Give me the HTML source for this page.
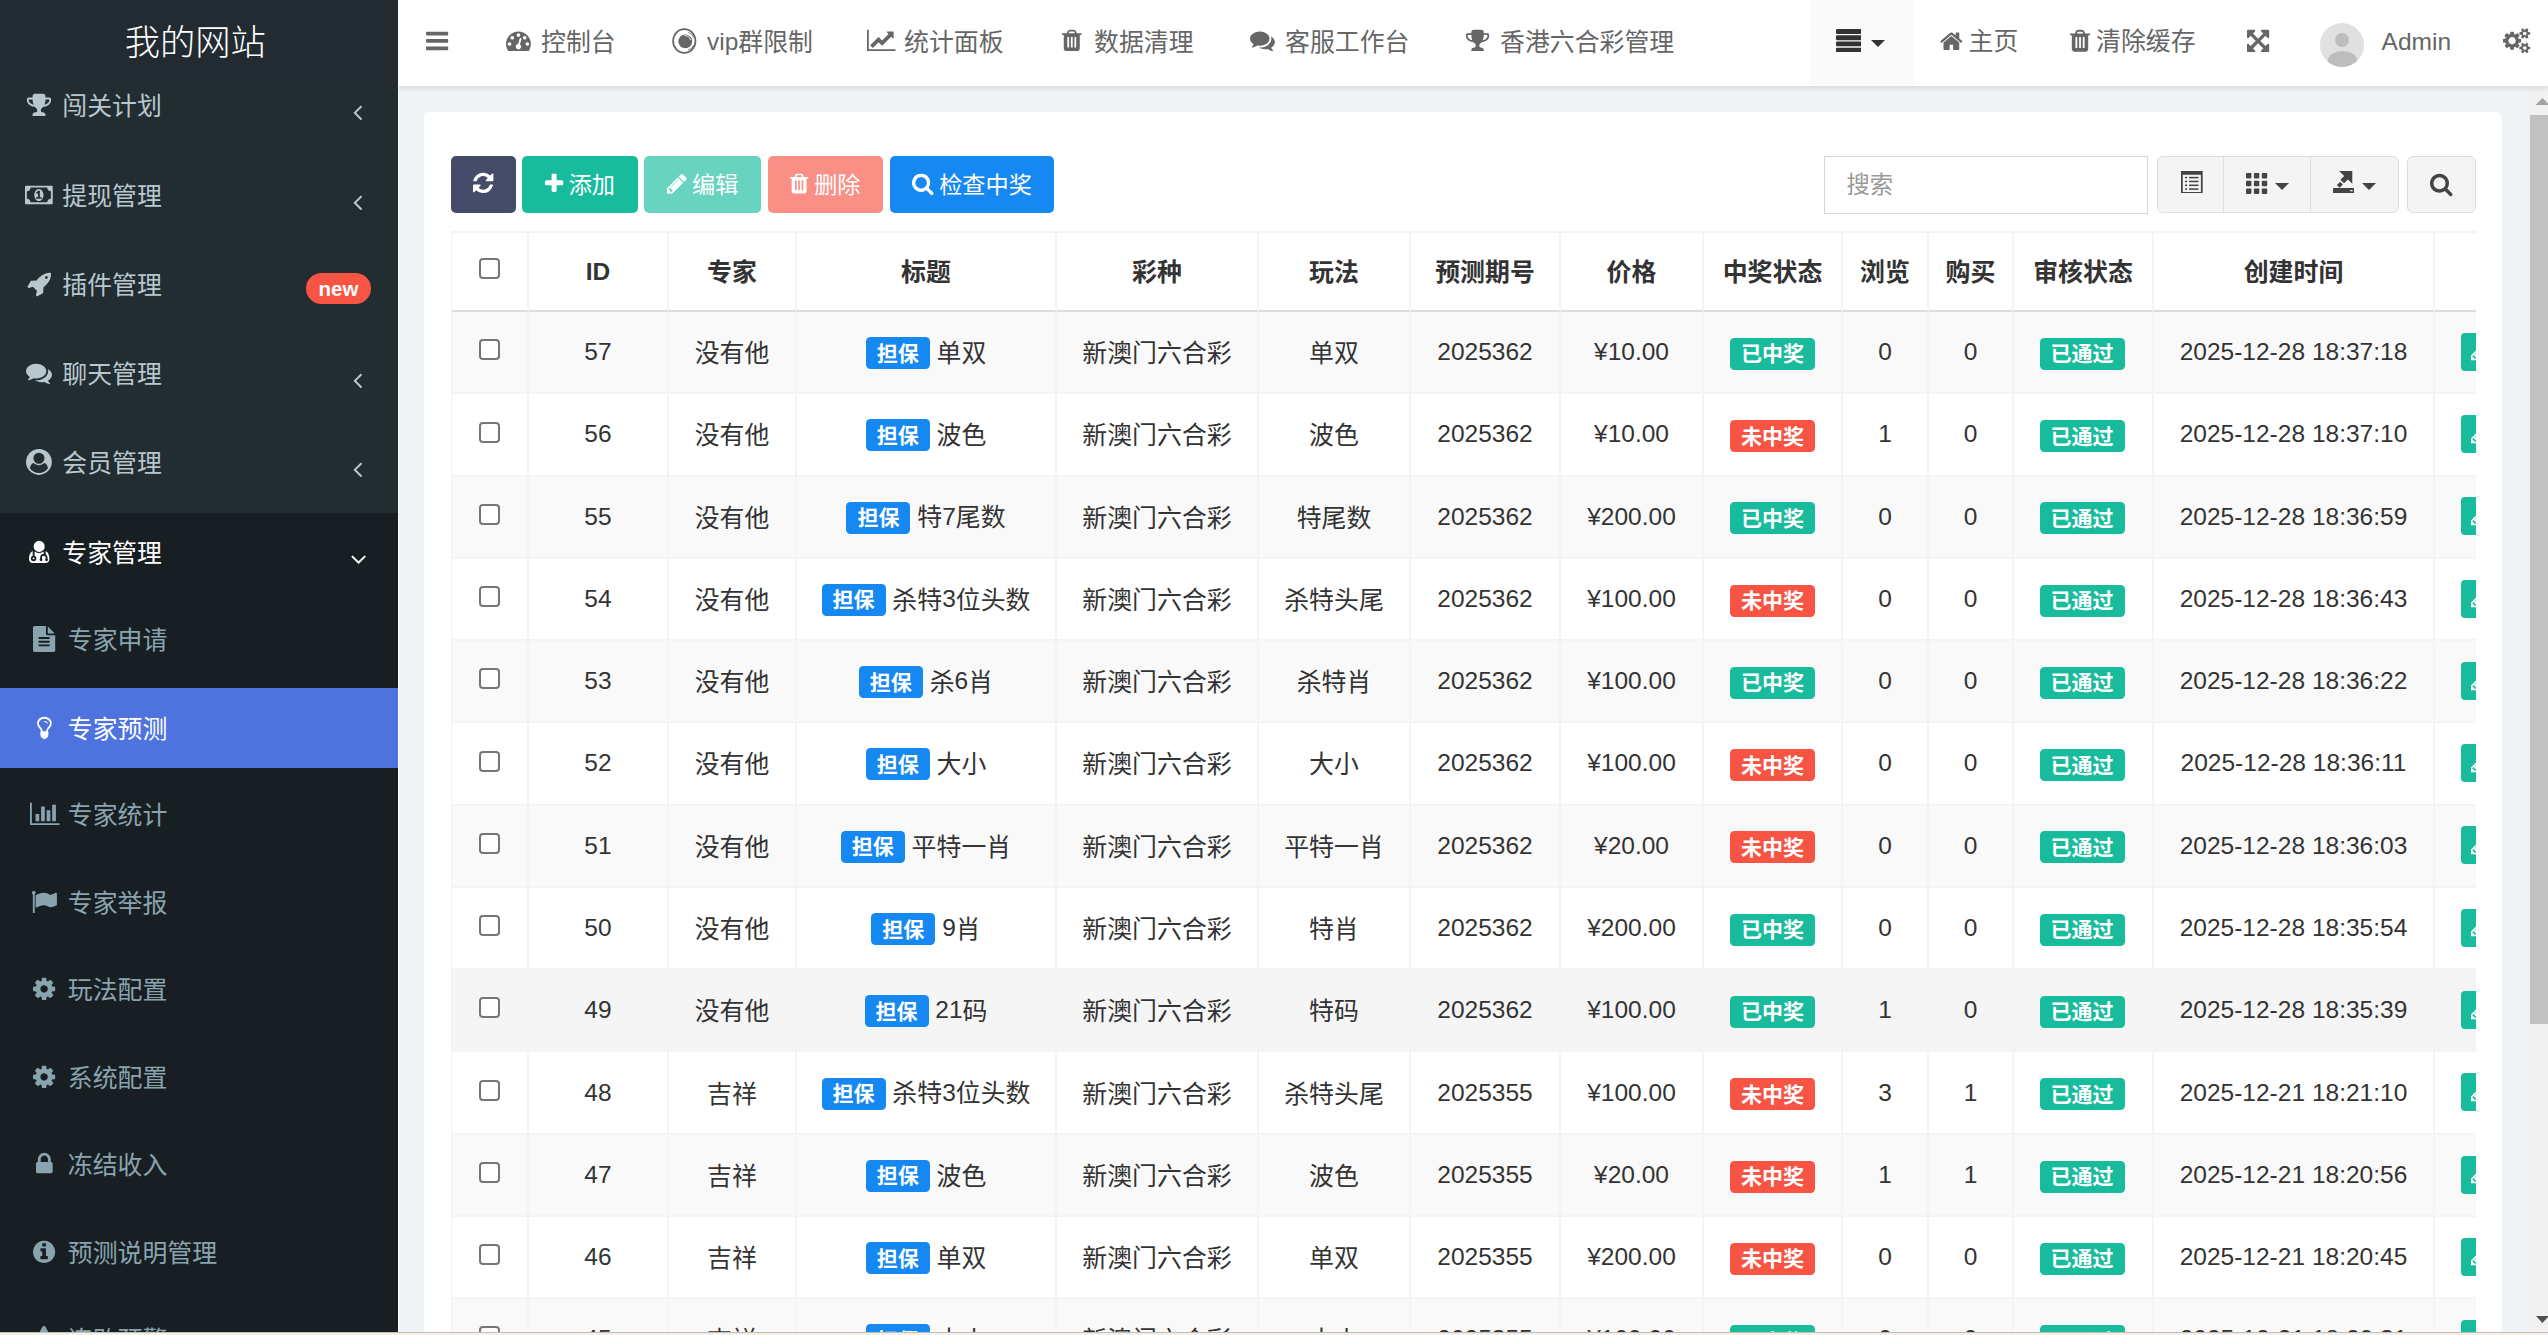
<!DOCTYPE html><html lang="zh-CN"><head><meta charset="utf-8"><title>我的网站</title><style>
*{box-sizing:border-box}
html,body{margin:0;padding:0}
body{width:2548px;height:1335px;overflow:hidden;position:relative;background:#f0f3f6;
 font-family:"Liberation Sans","Noto Sans CJK SC",sans-serif;font-size:24.9px;color:#333;line-height:1.428}
.l{font-size:24.5px}
td .c{position:relative;top:1.8px}
th .c{position:relative;top:1.3px}
th .cb{top:-5px}
svg.fa{display:inline-block;vertical-align:-0.143em;overflow:visible}
.abs{position:absolute}
#side{position:absolute;left:0;top:0;width:398px;height:1332px;background:#222d32;overflow:hidden;z-index:5}
#logo{display:block;text-decoration:none;position:absolute;left:0;top:0;width:398px;height:86px;background:#222b31;color:#fff;font-size:35.3px;font-weight:300;
 text-align:center;line-height:85.5px;z-index:3;padding-right:7.5px}
.mi{display:block;text-decoration:none;position:absolute;left:0;width:398px;color:#b8c7ce;white-space:nowrap}
.mi .ic{position:absolute;top:0;height:100%;display:flex;align-items:center;justify-content:center;width:60px}
.mi .tx{position:absolute;top:1.8px;height:100%;display:flex;align-items:center;font-size:24.9px}
.mi .ar{position:absolute;top:0;height:100%;display:flex;align-items:center;justify-content:center;width:30px}
.mi.top{height:79px}
.mi.top .ic{left:9px}
.mi.top .tx{left:62.3px}
.mi.sub{height:80px;color:#8aa4af}
.mi.sub .ic{left:14.3px}
.mi.sub .tx{left:67.8px}
.mi.act{color:#fff}
.mi.sub.act{background:#4e73df}
#subbg{position:absolute;left:0;top:512.6px;width:398px;height:830px;background:#181f23}
#head{position:absolute;left:398px;top:0;width:2150px;height:86px;background:#fff;box-shadow:0 2px 5px rgba(20,35,50,.13);z-index:2;color:#666}
.hi{position:absolute;top:0;height:84px;display:flex;align-items:center;white-space:nowrap;font-size:24.9px}
#main{position:absolute;left:398px;top:86px;width:2150px;height:1246px;background:#f0f3f6;overflow:hidden}
#panel{position:absolute;left:26px;top:26px;width:2078px;height:1300px;background:#fff;border-radius:6px 6px 0 0}
.btn{border:0;margin:0;padding:0;font-family:inherit;line-height:1.428;cursor:pointer;position:absolute;top:44px;height:57px;border-radius:5px;color:#fff;font-size:23.2px;padding-top:1.5px;display:flex;align-items:center;justify-content:center;white-space:nowrap}
.tb{position:absolute;top:44px;height:56.5px;background:#f4f4f4;border:1.5px solid #ddd;display:flex;align-items:center;justify-content:center;color:#444}
.btn svg{position:relative;top:-1.3px}
.srch{left:1400px;top:44px;width:324px;height:58px;border:1.5px solid #d2d6de;border-radius:0;background:#fff;color:#555;font-family:inherit;font-size:23.3px;padding:1px 0 0 21.5px;margin:0;outline:0}
.srch::placeholder{color:#999;opacity:1}
.caret{display:inline-block;width:0;height:0;border-top:7.5px solid currentColor;border-left:7px solid transparent;border-right:7px solid transparent}
#tw{position:absolute;left:27px;top:119px;width:2025px;height:1126px;overflow:hidden}
table{border-collapse:separate;border-spacing:0;table-layout:fixed;border-top:2px solid #f4f4f4;border-left:1px solid #f4f4f4}
th,td{text-align:center;vertical-align:middle;border-right:2px solid #f4f4f4;border-bottom:2px solid #f4f4f4;padding:0;white-space:nowrap;overflow:hidden}
th{height:79px;font-weight:bold;border-bottom:2px solid #ddd}
td{height:82.28px}
tr.odd td{background:#f9f9f9}
.cb{display:inline-block;width:21px;height:21px;border:2px solid #767676;border-radius:4px;background:#fff;vertical-align:middle;position:relative;top:-4px}
.lb{display:inline-block;font-size:21px;font-weight:bold;color:#fff;line-height:21px;padding:5.5px 11px 5.5px;border-radius:4.5px;vertical-align:baseline;position:relative;top:0.5px}
.lb.s{top:1px}
.lb.b{background:#1688f1}.lb.g{background:#18bc9c}.lb.r{background:#f75444}
.eb{display:inline-block;width:40px;height:38px;background:#18bc9c;border-radius:4px;vertical-align:middle;margin-left:26px;position:relative;top:-0.5px;color:#fff}
.eb svg{position:absolute;left:10.4px;top:8.6px}
tr.hov td{background:#f5f5f5 !important}
</style></head><body>
<aside id="side">
<div id="subbg"></div>
<a href="#" class="mi top" style="top:65.5px"><span class="ic"><svg class="fa" width="24.05" height="25.90" viewBox="0 0 1664 1792" style=""><path fill="currentColor" transform="translate(0,1536) scale(1,-1)" d="M458 653q-74 162 -74 371h-256v-96q0 -78 94.5 -162t235.5 -113zM1536 928v96h-256q0 -209 -74 -371q141 29 235.5 113t94.5 162zM1664 1056v-128q0 -71 -41.5 -143t-112 -130t-173 -97.5t-215.5 -44.5q-42 -54 -95 -95q-38 -34 -52.5 -72.5t-14.5 -89.5q0 -54 30.5 -91 t97.5 -37q75 0 133.5 -45.5t58.5 -114.5v-64q0 -14 -9 -23t-23 -9h-832q-14 0 -23 9t-9 23v64q0 69 58.5 114.5t133.5 45.5q67 0 97.5 37t30.5 91q0 51 -14.5 89.5t-52.5 72.5q-53 41 -95 95q-113 5 -215.5 44.5t-173 97.5t-112 130t-41.5 143v128q0 40 28 68t68 28h288v96 q0 66 47 113t113 47h576q66 0 113 -47t47 -113v-96h288q40 0 68 -28t28 -68z"/></svg></span><span class="tx">闯关计划</span>
<span class="ar" style="left:343px;top:6.5px"><svg class="fa" width="9.25" height="25.90" viewBox="0 0 640 1792" style=""><path fill="currentColor" transform="translate(0,1536) scale(1,-1)" d="M627 992q0 -13 -10 -23l-393 -393l393 -393q10 -10 10 -23t-10 -23l-50 -50q-10 -10 -23 -10t-23 10l-466 466q-10 10 -10 23t10 23l466 466q10 10 23 10t23 -10l50 -50q10 -10 10 -23z"/></svg></span>
</a>
<a href="#" class="mi top" style="top:155.5px"><span class="ic"><svg class="fa" width="27.75" height="25.90" viewBox="0 0 1920 1792" style=""><path fill="currentColor" transform="translate(0,1536) scale(1,-1)" d="M768 384h384v96h-128v448h-114l-148 -137l77 -80q42 37 55 57h2v-288h-128v-96zM1280 640q0 -70 -21 -142t-59.5 -134t-101.5 -101t-138 -39t-138 39t-101.5 101t-59.5 134t-21 142t21 142t59.5 134t101.5 101t138 39t138 -39t101.5 -101t59.5 -134t21 -142zM1792 384 v512q-106 0 -181 75t-75 181h-1152q0 -106 -75 -181t-181 -75v-512q106 0 181 -75t75 -181h1152q0 106 75 181t181 75zM1920 1216v-1152q0 -26 -19 -45t-45 -19h-1792q-26 0 -45 19t-19 45v1152q0 26 19 45t45 19h1792q26 0 45 -19t19 -45z"/></svg></span><span class="tx">提现管理</span>
<span class="ar" style="left:343px;top:6.5px"><svg class="fa" width="9.25" height="25.90" viewBox="0 0 640 1792" style=""><path fill="currentColor" transform="translate(0,1536) scale(1,-1)" d="M627 992q0 -13 -10 -23l-393 -393l393 -393q10 -10 10 -23t-10 -23l-50 -50q-10 -10 -23 -10t-23 10l-466 466q-10 10 -10 23t10 23l466 466q10 10 23 10t23 -10l50 -50q10 -10 10 -23z"/></svg></span>
</a>
<a href="#" class="mi top" style="top:244.5px"><span class="ic"><svg class="fa" width="24.05" height="25.90" viewBox="0 0 1664 1792" style=""><path fill="currentColor" transform="translate(0,1536) scale(1,-1)" d="M1440 1088q0 40 -28 68t-68 28t-68 -28t-28 -68t28 -68t68 -28t68 28t28 68zM1664 1376q0 -249 -75.5 -430.5t-253.5 -360.5q-81 -80 -195 -176l-20 -379q-2 -16 -16 -26l-384 -224q-7 -4 -16 -4q-12 0 -23 9l-64 64q-13 14 -8 32l85 276l-281 281l-276 -85q-3 -1 -9 -1 q-14 0 -23 9l-64 64q-17 19 -5 39l224 384q10 14 26 16l379 20q96 114 176 195q188 187 358 258t431 71q14 0 24 -9.5t10 -22.5z"/></svg></span><span class="tx">插件管理</span>
<span class="abs" style="left:306px;top:28px;width:65px;height:31px;border-radius:16px;background:#f75444;color:#fff;font-weight:bold;font-size:20.5px;line-height:31px;text-align:center">new</span>
</a>
<a href="#" class="mi top" style="top:333.5px"><span class="ic"><svg class="fa" width="25.90" height="25.90" viewBox="0 0 1792 1792" style=""><path fill="currentColor" transform="translate(0,1536) scale(1,-1)" d="M1408 768q0 -139 -94 -257t-256.5 -186.5t-353.5 -68.5q-86 0 -176 16q-124 -88 -278 -128q-36 -9 -86 -16h-3q-11 0 -20.5 8t-11.5 21q-1 3 -1 6.5t0.5 6.5t2 6l2.5 5t3.5 5.5t4 5t4.5 5t4 4.5q5 6 23 25t26 29.5t22.5 29t25 38.5t20.5 44q-124 72 -195 177t-71 224 q0 139 94 257t256.5 186.5t353.5 68.5t353.5 -68.5t256.5 -186.5t94 -257zM1792 512q0 -120 -71 -224.5t-195 -176.5q10 -24 20.5 -44t25 -38.5t22.5 -29t26 -29.5t23 -25q1 -1 4 -4.5t4.5 -5t4 -5t3.5 -5.5l2.5 -5t2 -6t0.5 -6.5t-1 -6.5q-3 -14 -13 -22t-22 -7 q-50 7 -86 16q-154 40 -278 128q-90 -16 -176 -16q-271 0 -472 132q58 -4 88 -4q161 0 309 45t264 129q125 92 192 212t67 254q0 77 -23 152q129 -71 204 -178t75 -230z"/></svg></span><span class="tx">聊天管理</span>
<span class="ar" style="left:343px;top:6.5px"><svg class="fa" width="9.25" height="25.90" viewBox="0 0 640 1792" style=""><path fill="currentColor" transform="translate(0,1536) scale(1,-1)" d="M627 992q0 -13 -10 -23l-393 -393l393 -393q10 -10 10 -23t-10 -23l-50 -50q-10 -10 -23 -10t-23 10l-466 466q-10 10 -10 23t10 23l466 466q10 10 23 10t23 -10l50 -50q10 -10 10 -23z"/></svg></span>
</a>
<a href="#" class="mi top" style="top:422.5px"><span class="ic"><svg class="fa" width="25.90" height="25.90" viewBox="0 0 1792 1792" style=""><path fill="currentColor" transform="translate(0,1536) scale(1,-1)" d="M1523 197q-22 155 -87.5 257.5t-184.5 118.5q-67 -74 -159.5 -115.5t-195.5 -41.5t-195.5 41.5t-159.5 115.5q-119 -16 -184.5 -118.5t-87.5 -257.5q106 -150 271 -237.5t356 -87.5t356 87.5t271 237.5zM1280 896q0 159 -112.5 271.5t-271.5 112.5t-271.5 -112.5 t-112.5 -271.5t112.5 -271.5t271.5 -112.5t271.5 112.5t112.5 271.5zM1792 640q0 -182 -71 -347.5t-190.5 -286t-285.5 -191.5t-349 -71q-182 0 -348 71t-286 191t-191 286t-71 348t71 348t191 286t286 191t348 71t348 -71t286 -191t191 -286t71 -348z"/></svg></span><span class="tx">会员管理</span>
<span class="ar" style="left:343px;top:6.5px"><svg class="fa" width="9.25" height="25.90" viewBox="0 0 640 1792" style=""><path fill="currentColor" transform="translate(0,1536) scale(1,-1)" d="M627 992q0 -13 -10 -23l-393 -393l393 -393q10 -10 10 -23t-10 -23l-50 -50q-10 -10 -23 -10t-23 10l-466 466q-10 10 -10 23t10 23l466 466q10 10 23 10t23 -10l50 -50q10 -10 10 -23z"/></svg></span>
</a>
<a href="#" class="mi top act" style="top:512.5px"><span class="ic"><svg class="fa" width="20.35" height="25.90" viewBox="0 0 1408 1792" style=""><path fill="currentColor" transform="translate(0,1536) scale(1,-1)" d="M384 192q0 -26 -19 -45t-45 -19t-45 19t-19 45t19 45t45 19t45 -19t19 -45zM1408 131q0 -121 -73 -190t-194 -69h-874q-121 0 -194 69t-73 190q0 68 5.5 131t24 138t47.5 132.5t81 103t120 60.5q-22 -52 -22 -120v-203q-58 -20 -93 -70t-35 -111q0 -80 56 -136t136 -56 t136 56t56 136q0 61 -35.5 111t-92.5 70v203q0 62 25 93q132 -104 295 -104t295 104q25 -31 25 -93v-64q-106 0 -181 -75t-75 -181v-89q-32 -29 -32 -71q0 -40 28 -68t68 -28t68 28t28 68q0 42 -32 71v89q0 52 38 90t90 38t90 -38t38 -90v-89q-32 -29 -32 -71q0 -40 28 -68 t68 -28t68 28t28 68q0 42 -32 71v89q0 68 -34.5 127.5t-93.5 93.5q0 10 0.5 42.5t0 48t-2.5 41.5t-7 47t-13 40q68 -15 120 -60.5t81 -103t47.5 -132.5t24 -138t5.5 -131zM1088 1024q0 -159 -112.5 -271.5t-271.5 -112.5t-271.5 112.5t-112.5 271.5t112.5 271.5t271.5 112.5 t271.5 -112.5t112.5 -271.5z"/></svg></span><span class="tx">专家管理</span>
<span class="ar" style="left:342.3px;top:7.5px"><svg class="fa" width="9.25" height="25.90" viewBox="0 0 640 1792" style="transform:rotate(-90deg)"><path fill="currentColor" transform="translate(0,1536) scale(1,-1)" d="M627 992q0 -13 -10 -23l-393 -393l393 -393q10 -10 10 -23t-10 -23l-50 -50q-10 -10 -23 -10t-23 10l-466 466q-10 10 -10 23t10 23l466 466q10 10 23 10t23 -10l50 -50q10 -10 10 -23z"/></svg></span>
</a>
<a href="#" class="mi sub" style="top:599px"><span class="ic"><svg class="fa" width="22.20" height="25.90" viewBox="0 0 1536 1792" style=""><path fill="currentColor" transform="translate(0,1536) scale(1,-1)" d="M1468 1060q14 -14 28 -36h-472v472q22 -14 36 -28zM992 896h544v-1056q0 -40 -28 -68t-68 -28h-1344q-40 0 -68 28t-28 68v1600q0 40 28 68t68 28h800v-544q0 -40 28 -68t68 -28zM1152 160v64q0 14 -9 23t-23 9h-704q-14 0 -23 -9t-9 -23v-64q0 -14 9 -23t23 -9h704 q14 0 23 9t9 23zM1152 416v64q0 14 -9 23t-23 9h-704q-14 0 -23 -9t-9 -23v-64q0 -14 9 -23t23 -9h704q14 0 23 9t9 23zM1152 672v64q0 14 -9 23t-23 9h-704q-14 0 -23 -9t-9 -23v-64q0 -14 9 -23t23 -9h704q14 0 23 9t9 23z"/></svg></span><span class="tx">专家申请</span></a>
<a href="#" class="mi sub act" style="top:688px"><span class="ic"><svg class="fa" width="14.80" height="25.90" viewBox="0 0 1024 1792" style=""><path fill="currentColor" transform="translate(0,1536) scale(1,-1)" d="M736 960q0 -13 -9.5 -22.5t-22.5 -9.5t-22.5 9.5t-9.5 22.5q0 46 -54 71t-106 25q-13 0 -22.5 9.5t-9.5 22.5t9.5 22.5t22.5 9.5q50 0 99.5 -16t87 -54t37.5 -90zM896 960q0 72 -34.5 134t-90 101.5t-123 62t-136.5 22.5t-136.5 -22.5t-123 -62t-90 -101.5t-34.5 -134 q0 -101 68 -180q10 -11 30.5 -33t30.5 -33q128 -153 141 -298h228q13 145 141 298q10 11 30.5 33t30.5 33q68 79 68 180zM1024 960q0 -155 -103 -268q-45 -49 -74.5 -87t-59.5 -95.5t-34 -107.5q47 -28 47 -82q0 -37 -25 -64q25 -27 25 -64q0 -52 -45 -81q13 -23 13 -47 q0 -46 -31.5 -71t-77.5 -25q-20 -44 -60 -70t-87 -26t-87 26t-60 70q-46 0 -77.5 25t-31.5 71q0 24 13 47q-45 29 -45 81q0 37 25 64q-25 27 -25 64q0 54 47 82q-4 50 -34 107.5t-59.5 95.5t-74.5 87q-103 113 -103 268q0 99 44.5 184.5t117 142t164 89t186.5 32.5 t186.5 -32.5t164 -89t117 -142t44.5 -184.5z"/></svg></span><span class="tx">专家预测</span></a>
<a href="#" class="mi sub" style="top:774px"><span class="ic"><svg class="fa" width="29.60" height="25.90" viewBox="0 0 2048 1792" style=""><path fill="currentColor" transform="translate(0,1536) scale(1,-1)" d="M640 640v-512h-256v512h256zM1024 1152v-1024h-256v1024h256zM2048 0v-128h-2048v1536h128v-1408h1920zM1408 896v-768h-256v768h256zM1792 1280v-1152h-256v1152h256z"/></svg></span><span class="tx">专家统计</span></a>
<a href="#" class="mi sub" style="top:862px"><span class="ic"><svg class="fa" width="25.90" height="25.90" viewBox="0 0 1792 1792" style=""><path fill="currentColor" transform="translate(0,1536) scale(1,-1)" d="M320 1280q0 -72 -64 -110v-1266q0 -13 -9.5 -22.5t-22.5 -9.5h-64q-13 0 -22.5 9.5t-9.5 22.5v1266q-64 38 -64 110q0 53 37.5 90.5t90.5 37.5t90.5 -37.5t37.5 -90.5zM1792 1216v-763q0 -25 -12.5 -38.5t-39.5 -27.5q-215 -116 -369 -116q-61 0 -123.5 22t-108.5 48 t-115.5 48t-142.5 22q-192 0 -464 -146q-17 -9 -33 -9q-26 0 -45 19t-19 45v742q0 32 31 55q21 14 79 43q236 120 421 120q107 0 200 -29t219 -88q38 -19 88 -19q54 0 117.5 21t110 47t88 47t54.5 21q26 0 45 -19t19 -45z"/></svg></span><span class="tx">专家举报</span></a>
<a href="#" class="mi sub" style="top:949px"><span class="ic"><svg class="fa" width="22.20" height="25.90" viewBox="0 0 1536 1792" style=""><path fill="currentColor" transform="translate(0,1536) scale(1,-1)" d="M1024 640q0 106 -75 181t-181 75t-181 -75t-75 -181t75 -181t181 -75t181 75t75 181zM1536 749v-222q0 -12 -8 -23t-20 -13l-185 -28q-19 -54 -39 -91q35 -50 107 -138q10 -12 10 -25t-9 -23q-27 -37 -99 -108t-94 -71q-12 0 -26 9l-138 108q-44 -23 -91 -38 q-16 -136 -29 -186q-7 -28 -36 -28h-222q-14 0 -24.5 8.5t-11.5 21.5l-28 184q-49 16 -90 37l-141 -107q-10 -9 -25 -9q-14 0 -25 11q-126 114 -165 168q-7 10 -7 23q0 12 8 23q15 21 51 66.5t54 70.5q-27 50 -41 99l-183 27q-13 2 -21 12.5t-8 23.5v222q0 12 8 23t19 13 l186 28q14 46 39 92q-40 57 -107 138q-10 12 -10 24q0 10 9 23q26 36 98.5 107.5t94.5 71.5q13 0 26 -10l138 -107q44 23 91 38q16 136 29 186q7 28 36 28h222q14 0 24.5 -8.5t11.5 -21.5l28 -184q49 -16 90 -37l142 107q9 9 24 9q13 0 25 -10q129 -119 165 -170q7 -8 7 -22 q0 -12 -8 -23q-15 -21 -51 -66.5t-54 -70.5q26 -50 41 -98l183 -28q13 -2 21 -12.5t8 -23.5z"/></svg></span><span class="tx">玩法配置</span></a>
<a href="#" class="mi sub" style="top:1037px"><span class="ic"><svg class="fa" width="22.20" height="25.90" viewBox="0 0 1536 1792" style=""><path fill="currentColor" transform="translate(0,1536) scale(1,-1)" d="M1024 640q0 106 -75 181t-181 75t-181 -75t-75 -181t75 -181t181 -75t181 75t75 181zM1536 749v-222q0 -12 -8 -23t-20 -13l-185 -28q-19 -54 -39 -91q35 -50 107 -138q10 -12 10 -25t-9 -23q-27 -37 -99 -108t-94 -71q-12 0 -26 9l-138 108q-44 -23 -91 -38 q-16 -136 -29 -186q-7 -28 -36 -28h-222q-14 0 -24.5 8.5t-11.5 21.5l-28 184q-49 16 -90 37l-141 -107q-10 -9 -25 -9q-14 0 -25 11q-126 114 -165 168q-7 10 -7 23q0 12 8 23q15 21 51 66.5t54 70.5q-27 50 -41 99l-183 27q-13 2 -21 12.5t-8 23.5v222q0 12 8 23t19 13 l186 28q14 46 39 92q-40 57 -107 138q-10 12 -10 24q0 10 9 23q26 36 98.5 107.5t94.5 71.5q13 0 26 -10l138 -107q44 23 91 38q16 136 29 186q7 28 36 28h222q14 0 24.5 -8.5t11.5 -21.5l28 -184q49 -16 90 -37l142 107q9 9 24 9q13 0 25 -10q129 -119 165 -170q7 -8 7 -22 q0 -12 -8 -23q-15 -21 -51 -66.5t-54 -70.5q26 -50 41 -98l183 -28q13 -2 21 -12.5t8 -23.5z"/></svg></span><span class="tx">系统配置</span></a>
<a href="#" class="mi sub" style="top:1124px"><span class="ic"><svg class="fa" width="16.65" height="25.90" viewBox="0 0 1152 1792" style=""><path fill="currentColor" transform="translate(0,1536) scale(1,-1)" d="M320 768h512v192q0 106 -75 181t-181 75t-181 -75t-75 -181v-192zM1152 672v-576q0 -40 -28 -68t-68 -28h-960q-40 0 -68 28t-28 68v576q0 40 28 68t68 28h32v192q0 184 132 316t316 132t316 -132t132 -316v-192h32q40 0 68 -28t28 -68z"/></svg></span><span class="tx">冻结收入</span></a>
<a href="#" class="mi sub" style="top:1212px"><span class="ic"><svg class="fa" width="22.20" height="25.90" viewBox="0 0 1536 1792" style=""><path fill="currentColor" transform="translate(0,1536) scale(1,-1)" d="M1024 160v160q0 14 -9 23t-23 9h-96v512q0 14 -9 23t-23 9h-320q-14 0 -23 -9t-9 -23v-160q0 -14 9 -23t23 -9h96v-320h-96q-14 0 -23 -9t-9 -23v-160q0 -14 9 -23t23 -9h448q14 0 23 9t9 23zM896 1056v160q0 14 -9 23t-23 9h-192q-14 0 -23 -9t-9 -23v-160q0 -14 9 -23 t23 -9h192q14 0 23 9t9 23zM1536 640q0 -209 -103 -385.5t-279.5 -279.5t-385.5 -103t-385.5 103t-279.5 279.5t-103 385.5t103 385.5t279.5 279.5t385.5 103t385.5 -103t279.5 -279.5t103 -385.5z"/></svg></span><span class="tx">预测说明管理</span></a>
<a href="#" class="mi sub" style="top:1299px"><span class="ic"><svg class="fa" width="25.90" height="25.90" viewBox="0 0 1792 1792" style=""><path fill="currentColor" transform="translate(0,1536) scale(1,-1)" d="M1024 161v190q0 14 -9.5 23.5t-22.5 9.5h-192q-13 0 -22.5 -9.5t-9.5 -23.5v-190q0 -14 9.5 -23.5t22.5 -9.5h192q13 0 22.5 9.5t9.5 23.5zM1022 535l18 459q0 12 -10 19q-13 11 -24 11h-220q-11 0 -24 -11q-10 -7 -10 -21l17 -457q0 -10 10 -16.5t24 -6.5h185 q14 0 23.5 6.5t10.5 16.5zM1008 1469l768 -1408q35 -63 -2 -126q-17 -29 -46.5 -46t-63.5 -17h-1536q-34 0 -63.5 17t-46.5 46q-37 63 -2 126l768 1408q17 31 47 49t65 18t65 -18t47 -49z"/></svg></span><span class="tx">连败预警</span></a>
<a id="logo" href="#">我的网站</a>
</aside>
<header id="head">
<div class="hi" style="left:28px;top:-1px"><svg class="fa" width="22.20" height="25.90" viewBox="0 0 1536 1792" style=""><path fill="currentColor" transform="translate(0,1536) scale(1,-1)" d="M1536 192v-128q0 -26 -19 -45t-45 -19h-1408q-26 0 -45 19t-19 45v128q0 26 19 45t45 19h1408q26 0 45 -19t19 -45zM1536 704v-128q0 -26 -19 -45t-45 -19h-1408q-26 0 -45 19t-19 45v128q0 26 19 45t45 19h1408q26 0 45 -19t19 -45zM1536 1216v-128q0 -26 -19 -45 t-45 -19h-1408q-26 0 -45 19t-19 45v128q0 26 19 45t45 19h1408q26 0 45 -19t19 -45z"/></svg></div>
<div class="hi" style="left:108px;top:-1.3px"><svg class="fa" width="24.90" height="24.90" viewBox="0 0 1792 1792" style=""><path fill="currentColor" transform="translate(0,1536) scale(1,-1)" d="M384 384q0 53 -37.5 90.5t-90.5 37.5t-90.5 -37.5t-37.5 -90.5t37.5 -90.5t90.5 -37.5t90.5 37.5t37.5 90.5zM576 832q0 53 -37.5 90.5t-90.5 37.5t-90.5 -37.5t-37.5 -90.5t37.5 -90.5t90.5 -37.5t90.5 37.5t37.5 90.5zM1004 351l101 382q6 26 -7.5 48.5t-38.5 29.5 t-48 -6.5t-30 -39.5l-101 -382q-60 -5 -107 -43.5t-63 -98.5q-20 -77 20 -146t117 -89t146 20t89 117q16 60 -6 117t-72 91zM1664 384q0 53 -37.5 90.5t-90.5 37.5t-90.5 -37.5t-37.5 -90.5t37.5 -90.5t90.5 -37.5t90.5 37.5t37.5 90.5zM1024 1024q0 53 -37.5 90.5 t-90.5 37.5t-90.5 -37.5t-37.5 -90.5t37.5 -90.5t90.5 -37.5t90.5 37.5t37.5 90.5zM1472 832q0 53 -37.5 90.5t-90.5 37.5t-90.5 -37.5t-37.5 -90.5t37.5 -90.5t90.5 -37.5t90.5 37.5t37.5 90.5zM1792 384q0 -261 -141 -483q-19 -29 -54 -29h-1402q-35 0 -54 29 q-141 221 -141 483q0 182 71 348t191 286t286 191t348 71t348 -71t286 -191t191 -286t71 -348z"/></svg></div>
<div class="hi" style="left:143px;top:0.6px"><span class="c">控制台</span></div>
<div class="hi" style="left:273px;top:-1.5px"><svg width="28" height="30" viewBox="0 0 28 30" style="display:block"><ellipse cx="13.3" cy="15" rx="11.2" ry="11.9" fill="none" stroke="#666" stroke-width="1.7"/><circle cx="14.3" cy="15.4" r="6.9" fill="#666"/><path d="M13.4 9.6 A6.2 6.2 0 0 1 19.6 14.2" fill="none" stroke="#fff" stroke-width="0.9"/><path d="M17.2 6.4 A10 10 0 0 1 23.2 12" fill="none" stroke="#666" stroke-width="0.8"/><path d="M23.2 18.6 A10 10 0 0 1 17 24.2" fill="none" stroke="#666" stroke-width="0.8"/></svg></div>
<div class="hi" style="left:309px;top:0.6px"><span class="l">vip</span><span class="c">群限制</span></div>
<div class="hi" style="left:469px;top:-1.3px"><svg class="fa" width="28.46" height="24.90" viewBox="0 0 2048 1792" style=""><path fill="currentColor" transform="translate(0,1536) scale(1,-1)" d="M2048 0v-128h-2048v1536h128v-1408h1920zM1920 1248v-435q0 -21 -19.5 -29.5t-35.5 7.5l-121 121l-633 -633q-10 -10 -23 -10t-23 10l-233 233l-416 -416l-192 192l585 585q10 10 23 10t23 -10l233 -233l464 464l-121 121q-16 16 -7.5 35.5t29.5 19.5h435q14 0 23 -9 t9 -23z"/></svg></div>
<div class="hi" style="left:506px;top:0.6px"><span class="c">统计面板</span></div>
<div class="hi" style="left:664px;top:-1.3px"><svg class="fa" width="19.56" height="24.90" viewBox="0 0 1408 1792" style=""><path fill="currentColor" transform="translate(0,1536) scale(1,-1)" d="M512 160v704q0 14 -9 23t-23 9h-64q-14 0 -23 -9t-9 -23v-704q0 -14 9 -23t23 -9h64q14 0 23 9t9 23zM768 160v704q0 14 -9 23t-23 9h-64q-14 0 -23 -9t-9 -23v-704q0 -14 9 -23t23 -9h64q14 0 23 9t9 23zM1024 160v704q0 14 -9 23t-23 9h-64q-14 0 -23 -9t-9 -23v-704 q0 -14 9 -23t23 -9h64q14 0 23 9t9 23zM480 1152h448l-48 117q-7 9 -17 11h-317q-10 -2 -17 -11zM1408 1120v-64q0 -14 -9 -23t-23 -9h-96v-948q0 -83 -47 -143.5t-113 -60.5h-832q-66 0 -113 58.5t-47 141.5v952h-96q-14 0 -23 9t-9 23v64q0 14 9 23t23 9h309l70 167 q15 37 54 63t79 26h320q40 0 79 -26t54 -63l70 -167h309q14 0 23 -9t9 -23z"/></svg></div>
<div class="hi" style="left:696px;top:0.6px"><span class="c">数据清理</span></div>
<div class="hi" style="left:852px;top:-1.3px"><svg class="fa" width="24.90" height="24.90" viewBox="0 0 1792 1792" style=""><path fill="currentColor" transform="translate(0,1536) scale(1,-1)" d="M1408 768q0 -139 -94 -257t-256.5 -186.5t-353.5 -68.5q-86 0 -176 16q-124 -88 -278 -128q-36 -9 -86 -16h-3q-11 0 -20.5 8t-11.5 21q-1 3 -1 6.5t0.5 6.5t2 6l2.5 5t3.5 5.5t4 5t4.5 5t4 4.5q5 6 23 25t26 29.5t22.5 29t25 38.5t20.5 44q-124 72 -195 177t-71 224 q0 139 94 257t256.5 186.5t353.5 68.5t353.5 -68.5t256.5 -186.5t94 -257zM1792 512q0 -120 -71 -224.5t-195 -176.5q10 -24 20.5 -44t25 -38.5t22.5 -29t26 -29.5t23 -25q1 -1 4 -4.5t4.5 -5t4 -5t3.5 -5.5l2.5 -5t2 -6t0.5 -6.5t-1 -6.5q-3 -14 -13 -22t-22 -7 q-50 7 -86 16q-154 40 -278 128q-90 -16 -176 -16q-271 0 -472 132q58 -4 88 -4q161 0 309 45t264 129q125 92 192 212t67 254q0 77 -23 152q129 -71 204 -178t75 -230z"/></svg></div>
<div class="hi" style="left:887px;top:0.6px"><span class="c">客服工作台</span></div>
<div class="hi" style="left:1068px;top:-1.3px"><svg class="fa" width="23.12" height="24.90" viewBox="0 0 1664 1792" style=""><path fill="currentColor" transform="translate(0,1536) scale(1,-1)" d="M458 653q-74 162 -74 371h-256v-96q0 -78 94.5 -162t235.5 -113zM1536 928v96h-256q0 -209 -74 -371q141 29 235.5 113t94.5 162zM1664 1056v-128q0 -71 -41.5 -143t-112 -130t-173 -97.5t-215.5 -44.5q-42 -54 -95 -95q-38 -34 -52.5 -72.5t-14.5 -89.5q0 -54 30.5 -91 t97.5 -37q75 0 133.5 -45.5t58.5 -114.5v-64q0 -14 -9 -23t-23 -9h-832q-14 0 -23 9t-9 23v64q0 69 58.5 114.5t133.5 45.5q67 0 97.5 37t30.5 91q0 51 -14.5 89.5t-52.5 72.5q-53 41 -95 95q-113 5 -215.5 44.5t-173 97.5t-112 130t-41.5 143v128q0 40 28 68t68 28h288v96 q0 66 47 113t113 47h576q66 0 113 -47t47 -113v-96h288q40 0 68 -28t28 -68z"/></svg></div>
<div class="hi" style="left:1102px;top:0.6px"><span class="c">香港六合彩管理</span></div>
<div class="abs" style="left:1412px;top:0;width:103px;height:86px;background:#fafafa"></div>
<div class="hi" style="left:1437.8px;top:-1.5px"><svg width="25.4" height="23.6" viewBox="0 0 25.4 23.6" fill="#333" style="display:block"><rect x="0" y="0.00" width="25.4" height="4.9" rx="1"/><rect x="0" y="6.23" width="25.4" height="4.9" rx="1"/><rect x="0" y="12.46" width="25.4" height="4.9" rx="1"/><rect x="0" y="18.69" width="25.4" height="4.9" rx="1"/></svg></div>
<div class="hi" style="left:1473px;"><span class="caret" style="color:#333;margin-top:2px"></span></div>
<div class="hi" style="left:1542px;top:-1px"><svg class="fa" width="22.75" height="24.50" viewBox="0 0 1664 1792" style=""><path fill="currentColor" transform="translate(0,1536) scale(1,-1)" d="M1408 544v-480q0 -26 -19 -45t-45 -19h-384v384h-256v-384h-384q-26 0 -45 19t-19 45v480q0 1 0.5 3t0.5 3l575 474l575 -474q1 -2 1 -6zM1631 613l-62 -74q-8 -9 -21 -11h-3q-13 0 -21 7l-692 577l-692 -577q-12 -8 -24 -7q-13 2 -21 11l-62 74q-8 10 -7 23.5t11 21.5 l719 599q32 26 76 26t76 -26l244 -204v195q0 14 9 23t23 9h192q14 0 23 -9t9 -23v-408l219 -182q10 -8 11 -21.5t-7 -23.5z"/></svg></div>
<div class="hi" style="left:1570.5px;">主页</div>
<div class="hi" style="left:1672px;top:-1.5px"><svg class="fa" width="20.04" height="25.50" viewBox="0 0 1408 1792" style=""><path fill="currentColor" transform="translate(0,1536) scale(1,-1)" d="M512 160v704q0 14 -9 23t-23 9h-64q-14 0 -23 -9t-9 -23v-704q0 -14 9 -23t23 -9h64q14 0 23 9t9 23zM768 160v704q0 14 -9 23t-23 9h-64q-14 0 -23 -9t-9 -23v-704q0 -14 9 -23t23 -9h64q14 0 23 9t9 23zM1024 160v704q0 14 -9 23t-23 9h-64q-14 0 -23 -9t-9 -23v-704 q0 -14 9 -23t23 -9h64q14 0 23 9t9 23zM480 1152h448l-48 117q-7 9 -17 11h-317q-10 -2 -17 -11zM1408 1120v-64q0 -14 -9 -23t-23 -9h-96v-948q0 -83 -47 -143.5t-113 -60.5h-832q-66 0 -113 58.5t-47 141.5v952h-96q-14 0 -23 9t-9 23v64q0 14 9 23t23 9h309l70 167 q15 37 54 63t79 26h320q40 0 79 -26t54 -63l70 -167h309q14 0 23 -9t9 -23z"/></svg></div>
<div class="hi" style="left:1698px;">清除缓存</div>
<div class="hi" style="left:1848.8000000000002px;top:-0.7px"><svg class="fa" width="22.20" height="25.90" viewBox="0 0 1536 1792" style=""><path fill="currentColor" transform="translate(0,1536) scale(1,-1)" d="M1283 995l-355 -355l355 -355l144 144q29 31 70 14q39 -17 39 -59v-448q0 -26 -19 -45t-45 -19h-448q-42 0 -59 40q-17 39 14 69l144 144l-355 355l-355 -355l144 -144q31 -30 14 -69q-17 -40 -59 -40h-448q-26 0 -45 19t-19 45v448q0 42 40 59q39 17 69 -14l144 -144 l355 355l-355 355l-144 -144q-19 -19 -45 -19q-12 0 -24 5q-40 17 -40 59v448q0 26 19 45t45 19h448q42 0 59 -40q17 -39 -14 -69l-144 -144l355 -355l355 355l-144 144q-31 30 -14 69q17 40 59 40h448q26 0 45 -19t19 -45v-448q0 -42 -39 -59q-13 -5 -25 -5q-26 0 -45 19z "/></svg></div>
<div class="abs" style="left:1922px;top:22.5px;width:44.2px;height:44.2px;border-radius:50%;background:#e0e0e0;overflow:hidden"><div class="abs" style="left:14.9px;top:10.3px;width:14.4px;height:14.4px;border-radius:50%;background:#bdbdbd"></div><div class="abs" style="left:7.6px;top:28px;width:29px;height:18px;border-radius:50%;background:#bdbdbd"></div></div>
<div class="hi" style="left:1983.6px;font-size:24.5px">Admin</div>
<div class="hi" style="left:2105px;top:-1px"><svg class="fa" width="27.21" height="25.40" viewBox="0 0 1920 1792" style=""><path fill="currentColor" transform="translate(0,1536) scale(1,-1)" d="M896 640q0 106 -75 181t-181 75t-181 -75t-75 -181t75 -181t181 -75t181 75t75 181zM1664 128q0 52 -38 90t-90 38t-90 -38t-38 -90q0 -53 37.5 -90.5t90.5 -37.5t90.5 37.5t37.5 90.5zM1664 1152q0 52 -38 90t-90 38t-90 -38t-38 -90q0 -53 37.5 -90.5t90.5 -37.5 t90.5 37.5t37.5 90.5zM1280 731v-185q0 -10 -7 -19.5t-16 -10.5l-155 -24q-11 -35 -32 -76q34 -48 90 -115q7 -11 7 -20q0 -12 -7 -19q-23 -30 -82.5 -89.5t-78.5 -59.5q-11 0 -21 7l-115 90q-37 -19 -77 -31q-11 -108 -23 -155q-7 -24 -30 -24h-186q-11 0 -20 7.5t-10 17.5 l-23 153q-34 10 -75 31l-118 -89q-7 -7 -20 -7q-11 0 -21 8q-144 133 -144 160q0 9 7 19q10 14 41 53t47 61q-23 44 -35 82l-152 24q-10 1 -17 9.5t-7 19.5v185q0 10 7 19.5t16 10.5l155 24q11 35 32 76q-34 48 -90 115q-7 11 -7 20q0 12 7 20q22 30 82 89t79 59q11 0 21 -7 l115 -90q34 18 77 32q11 108 23 154q7 24 30 24h186q11 0 20 -7.5t10 -17.5l23 -153q34 -10 75 -31l118 89q8 7 20 7q11 0 21 -8q144 -133 144 -160q0 -8 -7 -19q-12 -16 -42 -54t-45 -60q23 -48 34 -82l152 -23q10 -2 17 -10.5t7 -19.5zM1920 198v-140q0 -16 -149 -31 q-12 -27 -30 -52q51 -113 51 -138q0 -4 -4 -7q-122 -71 -124 -71q-8 0 -46 47t-52 68q-20 -2 -30 -2t-30 2q-14 -21 -52 -68t-46 -47q-2 0 -124 71q-4 3 -4 7q0 25 51 138q-18 25 -30 52q-149 15 -149 31v140q0 16 149 31q13 29 30 52q-51 113 -51 138q0 4 4 7q4 2 35 20 t59 34t30 16q8 0 46 -46.5t52 -67.5q20 2 30 2t30 -2q51 71 92 112l6 2q4 0 124 -70q4 -3 4 -7q0 -25 -51 -138q17 -23 30 -52q149 -15 149 -31zM1920 1222v-140q0 -16 -149 -31q-12 -27 -30 -52q51 -113 51 -138q0 -4 -4 -7q-122 -71 -124 -71q-8 0 -46 47t-52 68 q-20 -2 -30 -2t-30 2q-14 -21 -52 -68t-46 -47q-2 0 -124 71q-4 3 -4 7q0 25 51 138q-18 25 -30 52q-149 15 -149 31v140q0 16 149 31q13 29 30 52q-51 113 -51 138q0 4 4 7q4 2 35 20t59 34t30 16q8 0 46 -46.5t52 -67.5q20 2 30 2t30 -2q51 71 92 112l6 2q4 0 124 -70 q4 -3 4 -7q0 -25 -51 -138q17 -23 30 -52q149 -15 149 -31z"/></svg></div>
</header>
<main id="main"><div class="abs" style="left:0;top:0;width:1px;height:1246px;background:#fff"></div><div id="panel">
<button type="button" class="btn" style="left:27px;width:65px;background:#444c69;opacity:1"><svg class="fa" width="20.40" height="23.80" viewBox="0 0 1536 1792" style="position:relative;top:-1.9px;left:-0.6px"><path fill="currentColor" transform="translate(0,1536) scale(1,-1)" d="M1511 480q0 -5 -1 -7q-64 -268 -268 -434.5t-478 -166.5q-146 0 -282.5 55t-243.5 157l-129 -129q-19 -19 -45 -19t-45 19t-19 45v448q0 26 19 45t45 19h448q26 0 45 -19t19 -45t-19 -45l-137 -137q71 -66 161 -102t187 -36q134 0 250 65t186 179q11 17 53 117 q8 23 30 23h192q13 0 22.5 -9.5t9.5 -22.5zM1536 1280v-448q0 -26 -19 -45t-45 -19h-448q-26 0 -45 19t-19 45t19 45l138 138q-148 137 -349 137q-134 0 -250 -65t-186 -179q-11 -17 -53 -117q-8 -23 -30 -23h-199q-13 0 -22.5 9.5t-9.5 22.5v7q65 268 270 434.5t480 166.5 q146 0 284 -55.5t245 -156.5l130 129q19 19 45 19t45 -19t19 -45z"/></svg></button>
<button type="button" class="btn" style="left:98px;width:116px;background:#18bc9c;opacity:1"><svg class="fa" width="18.23" height="23.20" viewBox="0 0 1408 1792" style=""><path fill="currentColor" transform="translate(0,1536) scale(1,-1)" d="M1408 800v-192q0 -40 -28 -68t-68 -28h-416v-416q0 -40 -28 -68t-68 -28h-192q-40 0 -68 28t-28 68v416h-416q-40 0 -68 28t-28 68v192q0 40 28 68t68 28h416v416q0 40 28 68t68 28h192q40 0 68 -28t28 -68v-416h416q40 0 68 -28t28 -68z"/></svg><span style="margin-left:5.5px">添加</span></button>
<button type="button" class="btn" style="left:220px;width:117px;background:#18bc9c;opacity:0.65"><svg class="fa" width="19.89" height="23.20" viewBox="0 0 1536 1792" style=""><path fill="currentColor" transform="translate(0,1536) scale(1,-1)" d="M363 0l91 91l-235 235l-91 -91v-107h128v-128h107zM886 928q0 22 -22 22q-10 0 -17 -7l-542 -542q-7 -7 -7 -17q0 -22 22 -22q10 0 17 7l542 542q7 7 7 17zM832 1120l416 -416l-832 -832h-416v416zM1515 1024q0 -53 -37 -90l-166 -166l-416 416l166 165q36 38 90 38 q53 0 91 -38l235 -234q37 -39 37 -91z"/></svg><span style="margin-left:5.5px">编辑</span></button>
<button type="button" class="btn" style="left:344px;width:115px;background:#f75444;opacity:0.65"><svg class="fa" width="18.23" height="23.20" viewBox="0 0 1408 1792" style=""><path fill="currentColor" transform="translate(0,1536) scale(1,-1)" d="M512 160v704q0 14 -9 23t-23 9h-64q-14 0 -23 -9t-9 -23v-704q0 -14 9 -23t23 -9h64q14 0 23 9t9 23zM768 160v704q0 14 -9 23t-23 9h-64q-14 0 -23 -9t-9 -23v-704q0 -14 9 -23t23 -9h64q14 0 23 9t9 23zM1024 160v704q0 14 -9 23t-23 9h-64q-14 0 -23 -9t-9 -23v-704 q0 -14 9 -23t23 -9h64q14 0 23 9t9 23zM480 1152h448l-48 117q-7 9 -17 11h-317q-10 -2 -17 -11zM1408 1120v-64q0 -14 -9 -23t-23 -9h-96v-948q0 -83 -47 -143.5t-113 -60.5h-832q-66 0 -113 58.5t-47 141.5v952h-96q-14 0 -23 9t-9 23v64q0 14 9 23t23 9h309l70 167 q15 37 54 63t79 26h320q40 0 79 -26t54 -63l70 -167h309q14 0 23 -9t9 -23z"/></svg><span style="margin-left:5.5px">删除</span></button>
<button type="button" class="btn" style="left:466px;width:164px;background:#1688f1;opacity:1"><svg class="fa" width="21.54" height="23.20" viewBox="0 0 1664 1792" style=""><path fill="currentColor" transform="translate(0,1536) scale(1,-1)" d="M1152 704q0 185 -131.5 316.5t-316.5 131.5t-316.5 -131.5t-131.5 -316.5t131.5 -316.5t316.5 -131.5t316.5 131.5t131.5 316.5zM1664 -128q0 -52 -38 -90t-90 -38q-54 0 -90 38l-343 342q-179 -124 -399 -124q-143 0 -273.5 55.5t-225 150t-150 225t-55.5 273.5 t55.5 273.5t150 225t225 150t273.5 55.5t273.5 -55.5t225 -150t150 -225t55.5 -273.5q0 -220 -124 -399l343 -343q37 -37 37 -90z"/></svg><span style="margin-left:5.5px">检查中奖</span></button>
<input type="text" class="abs srch" placeholder="搜索">
<div class="tb" style="left:1733px;width:67px;border-radius:6px 0 0 6px"><span class="abs" style="left:23px;top:13.5px"><svg width="21.7" height="22.8" viewBox="0 0 21.7 22.8" fill="#444" style="display:block"><path fill-rule="evenodd" d="M0 0h21.7v22.8H0z M1.8 3.8h18.1v17.2H1.8z"/><rect x="4" y="5.85" width="2.1" height="1.5"/><rect x="8" y="5.85" width="9.5" height="1.5"/><rect x="4" y="9.70" width="2.1" height="1.5"/><rect x="8" y="9.70" width="9.5" height="1.5"/><rect x="4" y="13.55" width="2.1" height="1.5"/><rect x="8" y="13.55" width="9.5" height="1.5"/><rect x="4" y="17.35" width="2.1" height="1.5"/><rect x="8" y="17.35" width="9.5" height="1.5"/></svg></span></div>
<div class="tb" style="left:1798.5px;width:88.5px;"><span class="abs" style="left:22px;top:15.5px"><svg width="22" height="22" viewBox="0 0 22 22" fill="#444" style="display:block;overflow:visible"><rect x="0.0" y="0.00" width="5.4" height="5.4" rx="0.8"/><rect x="7.9" y="0.00" width="5.4" height="5.4" rx="0.8"/><rect x="15.8" y="0.00" width="5.4" height="5.4" rx="0.8"/><rect x="0.0" y="7.75" width="5.4" height="5.4" rx="0.8"/><rect x="7.9" y="7.75" width="5.4" height="5.4" rx="0.8"/><rect x="15.8" y="7.75" width="5.4" height="5.4" rx="0.8"/><rect x="0.0" y="15.50" width="5.4" height="5.4" rx="0.8"/><rect x="7.9" y="15.50" width="5.4" height="5.4" rx="0.8"/><rect x="15.8" y="15.50" width="5.4" height="5.4" rx="0.8"/></svg></span><span class="caret abs" style="left:51.5px;top:25.5px"></span></div>
<div class="tb" style="left:1885.5px;width:89px;border-radius:0 6px 6px 0"><span class="abs" style="left:22px;top:13.5px"><svg width="21.2" height="22.8" viewBox="0 0 21.2 22.8" fill="#444" style="display:block"><rect x="0" y="17" width="21.2" height="5.8" rx="0.8"/><rect x="17.1" y="19.1" width="2.6" height="1.2" fill="#f4f4f4"/><path d="M6.1 0H19.3V12.7L14.9 8.4 11 12.3 7.4 8.7 11.2 4.9z"/><path d="M9.9 13.4 6.6 16.7 3.9 14 7.2 10.7z"/></svg></span><span class="caret abs" style="left:51.5px;top:25.5px"></span></div>
<div class="tb" style="left:1983px;width:69px;border-radius:6px"><svg class="fa" width="22.47" height="24.20" viewBox="0 0 1664 1792" style=""><path fill="currentColor" transform="translate(0,1536) scale(1,-1)" d="M1152 704q0 185 -131.5 316.5t-316.5 131.5t-316.5 -131.5t-131.5 -316.5t131.5 -316.5t316.5 -131.5t316.5 131.5t131.5 316.5zM1664 -128q0 -52 -38 -90t-90 -38q-54 0 -90 38l-343 342q-179 -124 -399 -124q-143 0 -273.5 55.5t-225 150t-150 225t-55.5 273.5 t55.5 273.5t150 225t225 150t273.5 55.5t273.5 -55.5t225 -150t150 -225t55.5 -273.5q0 -220 -124 -399l343 -343q37 -37 37 -90z"/></svg></div>
<div id="tw"><table style="width:2284.0px"><colgroup><col style="width:77px"><col style="width:140px"><col style="width:128px"><col style="width:260px"><col style="width:202px"><col style="width:152px"><col style="width:150px"><col style="width:143px"><col style="width:139px"><col style="width:86px"><col style="width:85px"><col style="width:140px"><col style="width:281px"><col style="width:300px"></colgroup>
<thead><tr><th><span class="cb"></span></th><th><span class="l">ID</span></th><th><span class="c">专家</span></th><th><span class="c">标题</span></th><th><span class="c">彩种</span></th><th><span class="c">玩法</span></th><th><span class="c">预测期号</span></th><th><span class="c">价格</span></th><th><span class="c">中奖状态</span></th><th><span class="c">浏览</span></th><th><span class="c">购买</span></th><th><span class="c">审核状态</span></th><th><span class="c">创建时间</span></th><th><span class="c">操作</span></th></tr></thead><tbody>
<tr class="odd"><td><span class="cb"></span></td><td><span class="l">57</span></td><td><span class="c">没有他</span></td><td><span class="lb b">担保</span><span class="l"> </span><span class="c">单双</span></td><td><span class="c">新澳门六合彩</span></td><td><span class="c">单双</span></td><td><span class="l">2025362</span></td><td><span class="l">¥10.00</span></td><td><span class="lb g s">已中奖</span></td><td><span class="l">0</span></td><td><span class="l">0</span></td><td><span class="lb g s" style="left:-1px">已通过</span></td><td><span class="l">2025-12-28</span><span class="c"> </span><span class="l">18:37:18</span></td><td style="text-align:left"><span class="eb"><svg class="fa" width="17.79" height="20.76" viewBox="0 0 1536 1792" style=""><path fill="currentColor" transform="translate(0,1536) scale(1,-1)" d="M363 0l91 91l-235 235l-91 -91v-107h128v-128h107zM886 928q0 22 -22 22q-10 0 -17 -7l-542 -542q-7 -7 -7 -17q0 -22 22 -22q10 0 17 7l542 542q7 7 7 17zM832 1120l416 -416l-832 -832h-416v416zM1515 1024q0 -53 -37 -90l-166 -166l-416 416l166 165q36 38 90 38 q53 0 91 -38l235 -234q37 -39 37 -91z"/></svg></span></td></tr>
<tr class="even"><td><span class="cb"></span></td><td><span class="l">56</span></td><td><span class="c">没有他</span></td><td><span class="lb b">担保</span><span class="l"> </span><span class="c">波色</span></td><td><span class="c">新澳门六合彩</span></td><td><span class="c">波色</span></td><td><span class="l">2025362</span></td><td><span class="l">¥10.00</span></td><td><span class="lb r s">未中奖</span></td><td><span class="l">1</span></td><td><span class="l">0</span></td><td><span class="lb g s" style="left:-1px">已通过</span></td><td><span class="l">2025-12-28</span><span class="c"> </span><span class="l">18:37:10</span></td><td style="text-align:left"><span class="eb"><svg class="fa" width="17.79" height="20.76" viewBox="0 0 1536 1792" style=""><path fill="currentColor" transform="translate(0,1536) scale(1,-1)" d="M363 0l91 91l-235 235l-91 -91v-107h128v-128h107zM886 928q0 22 -22 22q-10 0 -17 -7l-542 -542q-7 -7 -7 -17q0 -22 22 -22q10 0 17 7l542 542q7 7 7 17zM832 1120l416 -416l-832 -832h-416v416zM1515 1024q0 -53 -37 -90l-166 -166l-416 416l166 165q36 38 90 38 q53 0 91 -38l235 -234q37 -39 37 -91z"/></svg></span></td></tr>
<tr class="odd"><td><span class="cb"></span></td><td><span class="l">55</span></td><td><span class="c">没有他</span></td><td><span class="lb b">担保</span><span class="l"> </span><span class="c">特</span><span class="l">7</span><span class="c">尾数</span></td><td><span class="c">新澳门六合彩</span></td><td><span class="c">特尾数</span></td><td><span class="l">2025362</span></td><td><span class="l">¥200.00</span></td><td><span class="lb g s">已中奖</span></td><td><span class="l">0</span></td><td><span class="l">0</span></td><td><span class="lb g s" style="left:-1px">已通过</span></td><td><span class="l">2025-12-28</span><span class="c"> </span><span class="l">18:36:59</span></td><td style="text-align:left"><span class="eb"><svg class="fa" width="17.79" height="20.76" viewBox="0 0 1536 1792" style=""><path fill="currentColor" transform="translate(0,1536) scale(1,-1)" d="M363 0l91 91l-235 235l-91 -91v-107h128v-128h107zM886 928q0 22 -22 22q-10 0 -17 -7l-542 -542q-7 -7 -7 -17q0 -22 22 -22q10 0 17 7l542 542q7 7 7 17zM832 1120l416 -416l-832 -832h-416v416zM1515 1024q0 -53 -37 -90l-166 -166l-416 416l166 165q36 38 90 38 q53 0 91 -38l235 -234q37 -39 37 -91z"/></svg></span></td></tr>
<tr class="even"><td><span class="cb"></span></td><td><span class="l">54</span></td><td><span class="c">没有他</span></td><td><span class="lb b">担保</span><span class="l"> </span><span class="c">杀特</span><span class="l">3</span><span class="c">位头数</span></td><td><span class="c">新澳门六合彩</span></td><td><span class="c">杀特头尾</span></td><td><span class="l">2025362</span></td><td><span class="l">¥100.00</span></td><td><span class="lb r s">未中奖</span></td><td><span class="l">0</span></td><td><span class="l">0</span></td><td><span class="lb g s" style="left:-1px">已通过</span></td><td><span class="l">2025-12-28</span><span class="c"> </span><span class="l">18:36:43</span></td><td style="text-align:left"><span class="eb"><svg class="fa" width="17.79" height="20.76" viewBox="0 0 1536 1792" style=""><path fill="currentColor" transform="translate(0,1536) scale(1,-1)" d="M363 0l91 91l-235 235l-91 -91v-107h128v-128h107zM886 928q0 22 -22 22q-10 0 -17 -7l-542 -542q-7 -7 -7 -17q0 -22 22 -22q10 0 17 7l542 542q7 7 7 17zM832 1120l416 -416l-832 -832h-416v416zM1515 1024q0 -53 -37 -90l-166 -166l-416 416l166 165q36 38 90 38 q53 0 91 -38l235 -234q37 -39 37 -91z"/></svg></span></td></tr>
<tr class="odd"><td><span class="cb"></span></td><td><span class="l">53</span></td><td><span class="c">没有他</span></td><td><span class="lb b">担保</span><span class="l"> </span><span class="c">杀</span><span class="l">6</span><span class="c">肖</span></td><td><span class="c">新澳门六合彩</span></td><td><span class="c">杀特肖</span></td><td><span class="l">2025362</span></td><td><span class="l">¥100.00</span></td><td><span class="lb g s">已中奖</span></td><td><span class="l">0</span></td><td><span class="l">0</span></td><td><span class="lb g s" style="left:-1px">已通过</span></td><td><span class="l">2025-12-28</span><span class="c"> </span><span class="l">18:36:22</span></td><td style="text-align:left"><span class="eb"><svg class="fa" width="17.79" height="20.76" viewBox="0 0 1536 1792" style=""><path fill="currentColor" transform="translate(0,1536) scale(1,-1)" d="M363 0l91 91l-235 235l-91 -91v-107h128v-128h107zM886 928q0 22 -22 22q-10 0 -17 -7l-542 -542q-7 -7 -7 -17q0 -22 22 -22q10 0 17 7l542 542q7 7 7 17zM832 1120l416 -416l-832 -832h-416v416zM1515 1024q0 -53 -37 -90l-166 -166l-416 416l166 165q36 38 90 38 q53 0 91 -38l235 -234q37 -39 37 -91z"/></svg></span></td></tr>
<tr class="even"><td><span class="cb"></span></td><td><span class="l">52</span></td><td><span class="c">没有他</span></td><td><span class="lb b">担保</span><span class="l"> </span><span class="c">大小</span></td><td><span class="c">新澳门六合彩</span></td><td><span class="c">大小</span></td><td><span class="l">2025362</span></td><td><span class="l">¥100.00</span></td><td><span class="lb r s">未中奖</span></td><td><span class="l">0</span></td><td><span class="l">0</span></td><td><span class="lb g s" style="left:-1px">已通过</span></td><td><span class="l">2025-12-28</span><span class="c"> </span><span class="l">18:36:11</span></td><td style="text-align:left"><span class="eb"><svg class="fa" width="17.79" height="20.76" viewBox="0 0 1536 1792" style=""><path fill="currentColor" transform="translate(0,1536) scale(1,-1)" d="M363 0l91 91l-235 235l-91 -91v-107h128v-128h107zM886 928q0 22 -22 22q-10 0 -17 -7l-542 -542q-7 -7 -7 -17q0 -22 22 -22q10 0 17 7l542 542q7 7 7 17zM832 1120l416 -416l-832 -832h-416v416zM1515 1024q0 -53 -37 -90l-166 -166l-416 416l166 165q36 38 90 38 q53 0 91 -38l235 -234q37 -39 37 -91z"/></svg></span></td></tr>
<tr class="odd"><td><span class="cb"></span></td><td><span class="l">51</span></td><td><span class="c">没有他</span></td><td><span class="lb b">担保</span><span class="l"> </span><span class="c">平特一肖</span></td><td><span class="c">新澳门六合彩</span></td><td><span class="c">平特一肖</span></td><td><span class="l">2025362</span></td><td><span class="l">¥20.00</span></td><td><span class="lb r s">未中奖</span></td><td><span class="l">0</span></td><td><span class="l">0</span></td><td><span class="lb g s" style="left:-1px">已通过</span></td><td><span class="l">2025-12-28</span><span class="c"> </span><span class="l">18:36:03</span></td><td style="text-align:left"><span class="eb"><svg class="fa" width="17.79" height="20.76" viewBox="0 0 1536 1792" style=""><path fill="currentColor" transform="translate(0,1536) scale(1,-1)" d="M363 0l91 91l-235 235l-91 -91v-107h128v-128h107zM886 928q0 22 -22 22q-10 0 -17 -7l-542 -542q-7 -7 -7 -17q0 -22 22 -22q10 0 17 7l542 542q7 7 7 17zM832 1120l416 -416l-832 -832h-416v416zM1515 1024q0 -53 -37 -90l-166 -166l-416 416l166 165q36 38 90 38 q53 0 91 -38l235 -234q37 -39 37 -91z"/></svg></span></td></tr>
<tr class="even"><td><span class="cb"></span></td><td><span class="l">50</span></td><td><span class="c">没有他</span></td><td><span class="lb b">担保</span><span class="l"> </span><span class="l">9</span><span class="c">肖</span></td><td><span class="c">新澳门六合彩</span></td><td><span class="c">特肖</span></td><td><span class="l">2025362</span></td><td><span class="l">¥200.00</span></td><td><span class="lb g s">已中奖</span></td><td><span class="l">0</span></td><td><span class="l">0</span></td><td><span class="lb g s" style="left:-1px">已通过</span></td><td><span class="l">2025-12-28</span><span class="c"> </span><span class="l">18:35:54</span></td><td style="text-align:left"><span class="eb"><svg class="fa" width="17.79" height="20.76" viewBox="0 0 1536 1792" style=""><path fill="currentColor" transform="translate(0,1536) scale(1,-1)" d="M363 0l91 91l-235 235l-91 -91v-107h128v-128h107zM886 928q0 22 -22 22q-10 0 -17 -7l-542 -542q-7 -7 -7 -17q0 -22 22 -22q10 0 17 7l542 542q7 7 7 17zM832 1120l416 -416l-832 -832h-416v416zM1515 1024q0 -53 -37 -90l-166 -166l-416 416l166 165q36 38 90 38 q53 0 91 -38l235 -234q37 -39 37 -91z"/></svg></span></td></tr>
<tr class="odd hov"><td><span class="cb"></span></td><td><span class="l">49</span></td><td><span class="c">没有他</span></td><td><span class="lb b">担保</span><span class="l"> </span><span class="l">21</span><span class="c">码</span></td><td><span class="c">新澳门六合彩</span></td><td><span class="c">特码</span></td><td><span class="l">2025362</span></td><td><span class="l">¥100.00</span></td><td><span class="lb g s">已中奖</span></td><td><span class="l">1</span></td><td><span class="l">0</span></td><td><span class="lb g s" style="left:-1px">已通过</span></td><td><span class="l">2025-12-28</span><span class="c"> </span><span class="l">18:35:39</span></td><td style="text-align:left"><span class="eb"><svg class="fa" width="17.79" height="20.76" viewBox="0 0 1536 1792" style=""><path fill="currentColor" transform="translate(0,1536) scale(1,-1)" d="M363 0l91 91l-235 235l-91 -91v-107h128v-128h107zM886 928q0 22 -22 22q-10 0 -17 -7l-542 -542q-7 -7 -7 -17q0 -22 22 -22q10 0 17 7l542 542q7 7 7 17zM832 1120l416 -416l-832 -832h-416v416zM1515 1024q0 -53 -37 -90l-166 -166l-416 416l166 165q36 38 90 38 q53 0 91 -38l235 -234q37 -39 37 -91z"/></svg></span></td></tr>
<tr class="even"><td><span class="cb"></span></td><td><span class="l">48</span></td><td><span class="c">吉祥</span></td><td><span class="lb b">担保</span><span class="l"> </span><span class="c">杀特</span><span class="l">3</span><span class="c">位头数</span></td><td><span class="c">新澳门六合彩</span></td><td><span class="c">杀特头尾</span></td><td><span class="l">2025355</span></td><td><span class="l">¥100.00</span></td><td><span class="lb r s">未中奖</span></td><td><span class="l">3</span></td><td><span class="l">1</span></td><td><span class="lb g s" style="left:-1px">已通过</span></td><td><span class="l">2025-12-21</span><span class="c"> </span><span class="l">18:21:10</span></td><td style="text-align:left"><span class="eb"><svg class="fa" width="17.79" height="20.76" viewBox="0 0 1536 1792" style=""><path fill="currentColor" transform="translate(0,1536) scale(1,-1)" d="M363 0l91 91l-235 235l-91 -91v-107h128v-128h107zM886 928q0 22 -22 22q-10 0 -17 -7l-542 -542q-7 -7 -7 -17q0 -22 22 -22q10 0 17 7l542 542q7 7 7 17zM832 1120l416 -416l-832 -832h-416v416zM1515 1024q0 -53 -37 -90l-166 -166l-416 416l166 165q36 38 90 38 q53 0 91 -38l235 -234q37 -39 37 -91z"/></svg></span></td></tr>
<tr class="odd"><td><span class="cb"></span></td><td><span class="l">47</span></td><td><span class="c">吉祥</span></td><td><span class="lb b">担保</span><span class="l"> </span><span class="c">波色</span></td><td><span class="c">新澳门六合彩</span></td><td><span class="c">波色</span></td><td><span class="l">2025355</span></td><td><span class="l">¥20.00</span></td><td><span class="lb r s">未中奖</span></td><td><span class="l">1</span></td><td><span class="l">1</span></td><td><span class="lb g s" style="left:-1px">已通过</span></td><td><span class="l">2025-12-21</span><span class="c"> </span><span class="l">18:20:56</span></td><td style="text-align:left"><span class="eb"><svg class="fa" width="17.79" height="20.76" viewBox="0 0 1536 1792" style=""><path fill="currentColor" transform="translate(0,1536) scale(1,-1)" d="M363 0l91 91l-235 235l-91 -91v-107h128v-128h107zM886 928q0 22 -22 22q-10 0 -17 -7l-542 -542q-7 -7 -7 -17q0 -22 22 -22q10 0 17 7l542 542q7 7 7 17zM832 1120l416 -416l-832 -832h-416v416zM1515 1024q0 -53 -37 -90l-166 -166l-416 416l166 165q36 38 90 38 q53 0 91 -38l235 -234q37 -39 37 -91z"/></svg></span></td></tr>
<tr class="even"><td><span class="cb"></span></td><td><span class="l">46</span></td><td><span class="c">吉祥</span></td><td><span class="lb b">担保</span><span class="l"> </span><span class="c">单双</span></td><td><span class="c">新澳门六合彩</span></td><td><span class="c">单双</span></td><td><span class="l">2025355</span></td><td><span class="l">¥200.00</span></td><td><span class="lb r s">未中奖</span></td><td><span class="l">0</span></td><td><span class="l">0</span></td><td><span class="lb g s" style="left:-1px">已通过</span></td><td><span class="l">2025-12-21</span><span class="c"> </span><span class="l">18:20:45</span></td><td style="text-align:left"><span class="eb"><svg class="fa" width="17.79" height="20.76" viewBox="0 0 1536 1792" style=""><path fill="currentColor" transform="translate(0,1536) scale(1,-1)" d="M363 0l91 91l-235 235l-91 -91v-107h128v-128h107zM886 928q0 22 -22 22q-10 0 -17 -7l-542 -542q-7 -7 -7 -17q0 -22 22 -22q10 0 17 7l542 542q7 7 7 17zM832 1120l416 -416l-832 -832h-416v416zM1515 1024q0 -53 -37 -90l-166 -166l-416 416l166 165q36 38 90 38 q53 0 91 -38l235 -234q37 -39 37 -91z"/></svg></span></td></tr>
<tr class="odd"><td><span class="cb"></span></td><td><span class="l">45</span></td><td><span class="c">吉祥</span></td><td><span class="lb b">担保</span><span class="l"> </span><span class="c">大小</span></td><td><span class="c">新澳门六合彩</span></td><td><span class="c">大小</span></td><td><span class="l">2025355</span></td><td><span class="l">¥100.00</span></td><td><span class="lb g s">已中奖</span></td><td><span class="l">0</span></td><td><span class="l">0</span></td><td><span class="lb g s" style="left:-1px">已通过</span></td><td><span class="l">2025-12-21</span><span class="c"> </span><span class="l">18:20:31</span></td><td style="text-align:left"><span class="eb"><svg class="fa" width="17.79" height="20.76" viewBox="0 0 1536 1792" style=""><path fill="currentColor" transform="translate(0,1536) scale(1,-1)" d="M363 0l91 91l-235 235l-91 -91v-107h128v-128h107zM886 928q0 22 -22 22q-10 0 -17 -7l-542 -542q-7 -7 -7 -17q0 -22 22 -22q10 0 17 7l542 542q7 7 7 17zM832 1120l416 -416l-832 -832h-416v416zM1515 1024q0 -53 -37 -90l-166 -166l-416 416l166 165q36 38 90 38 q53 0 91 -38l235 -234q37 -39 37 -91z"/></svg></span></td></tr>
</tbody></table></div>
</div>
<div class="abs" style="left:2130px;top:0;width:20px;height:1246px;background:#f1f1f1"></div>
<div class="abs" style="left:2132px;top:29px;width:18px;height:908.7px;background:#c1c1c1"></div>
<svg class="abs" style="left:2138.2px;top:10px" width="14" height="10" viewBox="0 0 14 10"><path d="M-0.3 8.9 L6.5 1.9 L13.3 8.9z" fill="#a3a3a3"/></svg>
<svg class="abs" style="left:2138.2px;top:1229px" width="14" height="10" viewBox="0 0 14 10"><path d="M-0.1 1 L6.4 7.9 L12.9 1z" fill="#505050"/></svg>
</main>
<div class="abs" style="left:0;top:1332px;width:2548px;height:3px;background:#f3f0e6;border-top:1px solid #c2c0b6;z-index:9"></div>
</body></html>
